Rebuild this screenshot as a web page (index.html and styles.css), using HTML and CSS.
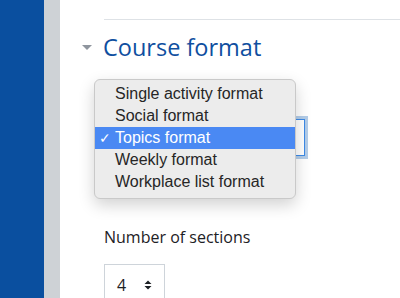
FILE: index.html
```html
<!DOCTYPE html>
<html lang="en">
<head>
    <meta charset="UTF-8">
    <meta name="viewport" content="width=device-width, initial-scale=1.0">
    <title>Course format</title>
    <link rel="stylesheet" href="styles.css">
</head>
<body>
    <div class="page">
        <div class="drawer"></div>
        <div class="rail"></div>
        <main class="content">
            <hr class="divider">
            <div class="section-head">
                <span class="caret"></span>
                <h3 class="section-title">Course format</h3>
            </div>

            <div class="field-select focused"></div>

            <label class="field-label" for="numsections">Number of sections</label>
            <div class="small-select" id="numsections">
                <span>4</span>
                <svg class="updown" width="8" height="10" viewBox="0 0 8 10">
                    <path d="M4 0.5 L7.5 4 L0.5 4 Z M4 9.5 L7.5 6 L0.5 6 Z" fill="#1d2125"/>
                </svg>
            </div>
        </main>
    </div>

    <!-- popup menu of the open select -->
    <ul class="popup">
        <li>Single activity format</li>
        <li>Social format</li>
        <li class="chosen"><span class="tick">&#10003;</span>Topics format</li>
        <li>Weekly format</li>
        <li>Workplace list format</li>
    </ul>
</body>
</html>
```

FILE: styles.css
```css
body {
    margin: 0;
    font-family: "Open Sans", "Liberation Sans", sans-serif;
    color: #1d2125;
    background: #fff;
}
.page {
    display: flex;
    height: 298px;
    overflow: hidden;
}
.drawer {
    width: 44px;
    background-color: #0a4f9f;
}
.rail {
    width: 16px;
    background-color: #ced2d6;
}
.content {
    flex: 1;
    padding-left: 44px;
}
.divider {
    margin: 19px 0 0 0;
    border: none;
    border-top: 1px solid #dee2e6;
}
.section-head {
    display: flex;
    align-items: center;
    margin-left: -22px;
    margin-top: 12px;
    height: 30px;
}
.caret {
    width: 0;
    height: 0;
    border-left: 5.5px solid transparent;
    border-right: 5.5px solid transparent;
    border-top: 5px solid #8f959e;
    margin-right: 11px;
}
.section-title {
    margin: 0;
    font-size: 23.5px;
    font-weight: 400;
    color: #0f4fa0;
}
.field-select {
    margin-top: 57px;
    width: 199px;
    height: 35px;
    border: 1px solid #3d8be8;
    box-shadow: 0 0 0 3px #b3cde9;
}
.field-label {
    display: block;
    margin-top: 70px;
    font-size: 16px;
}
.small-select {
    display: flex;
    align-items: center;
    justify-content: space-between;
    margin-top: 16px;
    width: 35px;
    height: 40px;
    padding: 0 12px 0 12px;
    border: 1px solid #ced4da;
    border-bottom: none;
    font-size: 16px;
}
.popup {
    position: absolute;
    left: 94px;
    top: 79px;
    width: 200px;
    margin: 0;
    padding: 3px 0 5px 0;
    list-style: none;
    background-color: #ececec;
    border: 1px solid #c9c9c9;
    border-radius: 6px;
    box-shadow: 0 6px 16px rgba(0, 0, 0, 0.18);
    font-family: "Liberation Sans", Arial, sans-serif;
    font-size: 16px;
    color: #262626;
}
.popup li {
    height: 22px;
    line-height: 22px;
    padding-left: 20px;
    position: relative;
}
.popup li.chosen {
    background-color: #4a89f3;
    color: #fff;
}
.tick {
    position: absolute;
    left: 4px;
    font-size: 14px;
}
```
